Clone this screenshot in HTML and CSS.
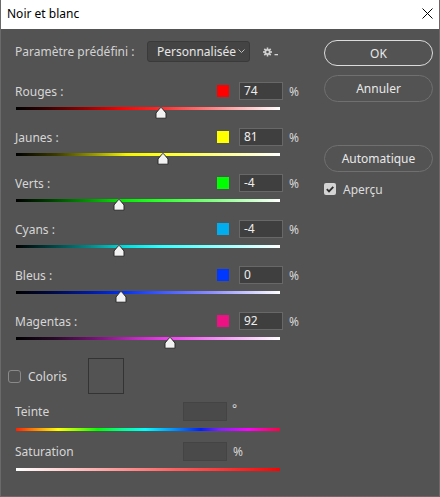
FILE: index.html
```html
<!DOCTYPE html>
<html lang="fr">
<head>
<meta charset="utf-8">
<title>Noir et blanc</title>
<link rel="stylesheet" href="styles.css">
</head>
<body>
<div class="window">
  <div class="titlebar">
    <span class="title">Noir et blanc</span>
    <svg class="close" width="11" height="11" viewBox="0 0 11 11"><path d="M0.5 0.5 L10.5 10.5 M10.5 0.5 L0.5 10.5" stroke="#000" stroke-width="1" fill="none"/></svg>
  </div>
  <div class="content">
    <div class="left">
      <div class="preset">
        <span class="preset-label">Paramètre prédéfini :</span>
        <div class="select">
          <span>Personnalisée</span>
          <svg width="7" height="4" viewBox="0 0 7 4"><path d="M0.5 0.5 L3.5 3.5 L6.5 0.5" stroke="#bdbdbd" fill="none"/></svg>
        </div>
        <svg class="gear" width="18" height="10" viewBox="0 0 18 10">
          <g fill="#d2d2d2">
            <circle cx="4.5" cy="5" r="3"/>
            <rect x="3.7" y="0.5" width="1.6" height="9"/>
            <rect x="0" y="4.2" width="9" height="1.6"/>
            <rect x="3.7" y="0.5" width="1.6" height="9" transform="rotate(45 4.5 5)"/>
            <rect x="3.7" y="0.5" width="1.6" height="9" transform="rotate(-45 4.5 5)"/>
            <rect x="11.5" y="7" width="3.5" height="1.3"/>
          </g>
          <circle cx="4.5" cy="5" r="1.3" fill="#535353"/>
        </svg>
      </div>

      <div class="channel">
        <div class="ch-head">
          <span class="ch-label">Rouges :</span>
          <span class="swatch" style="background:#ff0000"></span>
          <span class="num">74</span>
          <span class="unit">%</span>
        </div>
        <div class="track g-red"><svg class="thumb" style="left:139px" width="12" height="12" viewBox="0 0 12 12"><path d="M6 0.6 Q6.6 0.6 7.2 1.4 L11 6 L11 11.2 L1 11.2 L1 6 L4.8 1.4 Q5.4 0.6 6 0.6 Z" fill="#f2f2f2" stroke="#2b2b2b" stroke-width="1"/></svg></div>
      </div>

      <div class="channel">
        <div class="ch-head">
          <span class="ch-label">Jaunes :</span>
          <span class="swatch" style="background:#ffff00"></span>
          <span class="num">81</span>
          <span class="unit">%</span>
        </div>
        <div class="track g-yellow"><svg class="thumb" style="left:141px" width="12" height="12" viewBox="0 0 12 12"><path d="M6 0.6 Q6.6 0.6 7.2 1.4 L11 6 L11 11.2 L1 11.2 L1 6 L4.8 1.4 Q5.4 0.6 6 0.6 Z" fill="#f2f2f2" stroke="#2b2b2b" stroke-width="1"/></svg></div>
      </div>

      <div class="channel">
        <div class="ch-head">
          <span class="ch-label">Verts :</span>
          <span class="swatch" style="background:#00ff00"></span>
          <span class="num">-4</span>
          <span class="unit">%</span>
        </div>
        <div class="track g-green"><svg class="thumb" style="left:97px" width="12" height="12" viewBox="0 0 12 12"><path d="M6 0.6 Q6.6 0.6 7.2 1.4 L11 6 L11 11.2 L1 11.2 L1 6 L4.8 1.4 Q5.4 0.6 6 0.6 Z" fill="#f2f2f2" stroke="#2b2b2b" stroke-width="1"/></svg></div>
      </div>

      <div class="channel">
        <div class="ch-head">
          <span class="ch-label">Cyans :</span>
          <span class="swatch" style="background:#00aeef"></span>
          <span class="num">-4</span>
          <span class="unit">%</span>
        </div>
        <div class="track g-cyan"><svg class="thumb" style="left:97px" width="12" height="12" viewBox="0 0 12 12"><path d="M6 0.6 Q6.6 0.6 7.2 1.4 L11 6 L11 11.2 L1 11.2 L1 6 L4.8 1.4 Q5.4 0.6 6 0.6 Z" fill="#f2f2f2" stroke="#2b2b2b" stroke-width="1"/></svg></div>
      </div>

      <div class="channel">
        <div class="ch-head">
          <span class="ch-label">Bleus :</span>
          <span class="swatch" style="background:#0038ff"></span>
          <span class="num">0</span>
          <span class="unit">%</span>
        </div>
        <div class="track g-blue"><svg class="thumb" style="left:99px" width="12" height="12" viewBox="0 0 12 12"><path d="M6 0.6 Q6.6 0.6 7.2 1.4 L11 6 L11 11.2 L1 11.2 L1 6 L4.8 1.4 Q5.4 0.6 6 0.6 Z" fill="#f2f2f2" stroke="#2b2b2b" stroke-width="1"/></svg></div>
      </div>

      <div class="channel">
        <div class="ch-head">
          <span class="ch-label">Magentas :</span>
          <span class="swatch" style="background:#ec1283"></span>
          <span class="num">92</span>
          <span class="unit">%</span>
        </div>
        <div class="track g-magenta"><svg class="thumb" style="left:148px" width="12" height="12" viewBox="0 0 12 12"><path d="M6 0.6 Q6.6 0.6 7.2 1.4 L11 6 L11 11.2 L1 11.2 L1 6 L4.8 1.4 Q5.4 0.6 6 0.6 Z" fill="#f2f2f2" stroke="#2b2b2b" stroke-width="1"/></svg></div>
      </div>

      <div class="coloris">
        <span class="checkbox"></span>
        <span class="coloris-label">Coloris</span>
        <span class="colorbox"></span>
      </div>

      <div class="tint">
        <div class="ch-head tint-head">
          <span class="tint-label">Teinte</span>
          <span class="num disabled"></span>
          <span class="unit deg">°</span>
        </div>
        <div class="track thin g-hue"></div>
      </div>

      <div class="tint sat">
        <div class="ch-head tint-head">
          <span class="tint-label">Saturation</span>
          <span class="num disabled"></span>
          <span class="unit">%</span>
        </div>
        <div class="track thin g-sat"></div>
      </div>
    </div>

    <div class="right">
      <div class="btn btn-default">OK</div>
      <div class="btn btn-cancel">Annuler</div>
      <div class="btn btn-auto">Automatique</div>
      <div class="preview">
        <span class="checkbox checked">
          <svg width="12" height="12" viewBox="0 0 12 12"><path d="M2.8 6.2 L5 8.4 L9.3 3.8" stroke="#2e2e2e" stroke-width="1.8" fill="none"/></svg>
        </span>
        <span class="preview-label">Aperçu</span>
      </div>
    </div>
  </div>
</div>
</body>
</html>
```

FILE: styles.css
```css
* { box-sizing: border-box; }

html, body {
  margin: 0;
  padding: 0;
  background: #535353;
}

body {
  font-family: "Noto Sans", "Open Sans", sans-serif;
  font-size: 12px;
  color: #d6d6d6;
}

.window {
  width: 440px;
  height: 497px;
  border: 1px solid #6a6a6a;
  border-top: none;
  background: #535353;
  overflow: hidden;
}

.titlebar {
  height: 29px;
  background: #ffffff;
  display: flex;
  align-items: center;
  justify-content: space-between;
  padding: 0 6px 1px 6px;
}

.title {
  color: #000;
  font-size: 12px;
  line-height: 1;
}

.close {
  display: block;
  margin-top: -1px;
}

.content {
  display: flex;
  padding-left: 14px;
}

.left {
  width: 285px;
  display: flex;
  flex-direction: column;
}

.right {
  width: 109px;
  margin-left: 24px;
  padding-top: 11px;
  display: flex;
  flex-direction: column;
}

/* preset row */
.preset {
  margin-top: 12px;
  height: 20px;
  display: flex;
  align-items: center;
}

.preset-label {
  width: 132px;
  color: #d2d2d2;
}

.select {
  width: 103px;
  height: 21px;
  background: #444444;
  border: 1px solid #3a3a3a;
  border-radius: 3px;
  display: flex;
  align-items: center;
  justify-content: space-between;
  padding: 0 4px 0 9px;
  color: #e6e6e6;
}

.gear {
  display: block;
  margin-left: 13px;
  margin-top: 1px;
}

/* channels */
.channel {
  display: flex;
  flex-direction: column;
  margin-top: 21px;
}

.channel + .channel {
  margin-top: 18px;
}

.ch-head {
  display: flex;
  align-items: center;
  height: 18px;
}

.ch-label {
  width: 202px;
  color: #d6d6d6;
}

.swatch {
  width: 12px;
  height: 12px;
  margin-right: 10px;
}

.num {
  width: 44px;
  height: 18px;
  background: #3f3f3f;
  border: 1px solid #686868;
  color: #eeeeee;
  padding-left: 4px;
  line-height: 16px;
  font-size: 12px;
}

.num.disabled {
  height: 19px;
  background: #4a4a4a;
  border-color: #444444;
}

.unit {
  margin-left: 6px;
  color: #d6d6d6;
}

.unit.deg {
  margin-left: 5px;
  margin-top: -6px;
}

.track {
  position: relative;
  width: 264px;
  height: 3px;
  margin-left: 1px;
  margin-top: 7px;
}

.thumb {
  position: absolute;
  top: 0;
  display: block;
}

.g-red { background: linear-gradient(to right, #000 0%, #3a0000 12%, #9a0000 27%, #ff0000 40%, #ff2020 52%, #ff8585 75%, #ffe8e8 95%, #fff 100%); }
.g-yellow { background: linear-gradient(to right, #000 0%, #3a3a00 15%, #9a9a00 30%, #f4f400 42%, #ffff20 55%, #ffff9a 80%, #fff 100%); }
.g-green { background: linear-gradient(to right, #000 0%, #003a00 12%, #009a00 28%, #00e800 40%, #20ff20 52%, #90ff90 78%, #fff 100%); }
.g-cyan { background: linear-gradient(to right, #000 0%, #003a3a 12%, #008a8a 28%, #00e0e0 42%, #30ffff 55%, #a0ffff 80%, #fff 100%); }
.g-blue { background: linear-gradient(to right, #000 0%, #00083a 12%, #001aa0 28%, #0030f0 40%, #3050ff 52%, #9090ff 75%, #fff 100%); }
.g-magenta { background: linear-gradient(to right, #000 0%, #2a0a2a 15%, #801480 32%, #c028c0 45%, #ee40ee 58%, #f6a0f6 80%, #fff 100%); }

/* coloris */
.coloris {
  display: flex;
  align-items: center;
  margin-top: 18px;
  margin-left: -7px;
  height: 36px;
}

.checkbox {
  width: 13px;
  height: 13px;
  border: 1px solid #8a8a8a;
  border-radius: 3px;
  display: flex;
  align-items: center;
  justify-content: center;
}

.coloris-label {
  width: 60px;
  margin-left: 7px;
  color: #d8d8d8;
}

.colorbox {
  width: 36px;
  height: 36px;
  border: 1px solid #333333;
}

.tint {
  display: flex;
  flex-direction: column;
  margin-top: 8px;
}

.tint.sat {
  margin-top: 11px;
}

.tint-head {
  height: 19px;
}

.tint-label {
  width: 168px;
  color: #d6d6d6;
}

.track.thin {
  height: 3px;
}

.g-hue { background: linear-gradient(to right, #ff2000 0%, #ff9000 8%, #ffff00 16%, #80ff00 24%, #00ff00 31%, #00ff90 40%, #00ffff 49%, #0090ff 60%, #0020ff 70%, #8020ff 77%, #ff00ff 88%, #ff0040 100%); }
.g-sat { background: linear-gradient(to right, #ffffff 0%, #ffb0b0 30%, #ff6060 60%, #ff0000 100%); }

/* buttons */
.btn {
  height: 27px;
  border-radius: 14px;
  border: 1px solid #707070;
  display: flex;
  align-items: center;
  justify-content: center;
  color: #e8e8e8;
  font-size: 12px;
}

.btn-default {
  height: 26px;
  border: 1.5px solid #dcdcdc;
}

.btn-cancel {
  margin-top: 9px;
}

.btn-auto {
  margin-top: 43px;
}

.preview {
  display: flex;
  align-items: center;
  margin-top: 11px;
  height: 12px;
}

.checkbox.checked {
  width: 12px;
  height: 12px;
  border: none;
  background: #d4d4d4;
  border-radius: 2px;
}

.checkbox.checked svg {
  display: block;
}

.preview-label {
  margin-left: 7px;
  color: #dcdcdc;
}
```
